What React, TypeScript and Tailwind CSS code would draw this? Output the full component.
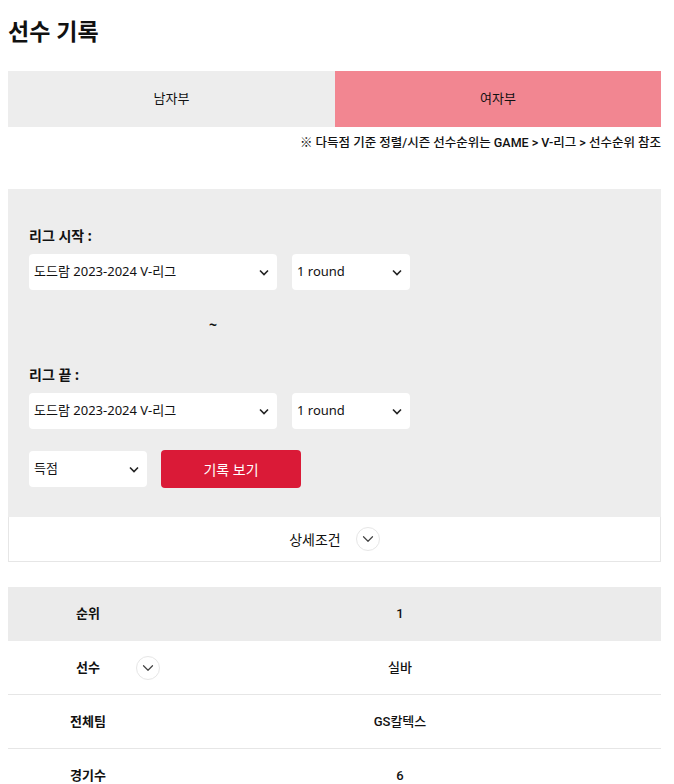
import { ChevronDown } from 'lucide-react';

const sans = "font-['Noto_Sans','Noto_Sans_CJK_KR',sans-serif]";
const roboto = "font-['Roboto','Noto_Sans_CJK_KR',sans-serif]";

function Caret() {
  return (
    <svg width="10" height="7" viewBox="0 0 10 7" className="shrink-0">
      <path d="M1 1.5 L5 5.5 L9 1.5" fill="none" stroke="#222" strokeWidth="1.6" />
    </svg>
  );
}

function Select({ label, width }: { label: string; width: string }) {
  return (
    <div
      className={`${width} flex h-9 items-center justify-between rounded-[4px] bg-white pr-[8px] pl-[5px] text-[13px] text-[#111]`}
    >
      <span>{label}</span>
      <Caret />
    </div>
  );
}

function CircleToggle() {
  return (
    <div className="flex h-[24px] w-[24px] items-center justify-center rounded-full border border-[#e6e6e6] bg-white">
      <ChevronDown size={18} strokeWidth={1.6} className="text-[#444]" />
    </div>
  );
}

const rows = [
  { label: '순위', value: '1', head: true },
  { label: '선수', value: '실바', toggle: true },
  { label: '전체팀', value: 'GS칼텍스' },
  { label: '경기수', value: '6' },
];

export default function App() {
  return (
    <div className={`${sans} h-[784px] w-[674px] overflow-hidden bg-white pr-[13px] pl-2 text-[#111]`}>
      <h1 className="pt-[16px] text-[23px] leading-[30px] font-bold">선수 기록</h1>

      <div className="mt-[25px] flex h-14 text-[13px]">
        <div className="flex w-[327px] items-center justify-center bg-[#ededed]">남자부</div>
        <div className="flex flex-1 items-center justify-center bg-[#f28691]">여자부</div>
      </div>
      <p className={`${roboto} mt-[7px] text-right text-[12.5px] leading-[18px] font-medium`}>
        ※ 다득점 기준 정렬/시즌 선수순위는 GAME &gt; V-리그 &gt; 선수순위 참조
      </p>

      <div className="mt-[37px] bg-[#ededed] px-[21px] pt-[37px] pb-[29px]">
        <p className="text-[14px] leading-[20px] font-bold">리그 시작 :</p>
        <div className="mt-[8px] flex gap-[15px]">
          <Select label="도드람 2023-2024 V-리그" width="w-[248px]" />
          <Select label="1 round" width="w-[118px]" />
        </div>
        <p className="mt-[25px] pl-[180px] text-[14px] leading-[20px] font-bold">~</p>
        <p className="mt-[30px] text-[14px] leading-[20px] font-bold">리그 끝 :</p>
        <div className="mt-[8px] flex gap-[15px]">
          <Select label="도드람 2023-2024 V-리그" width="w-[248px]" />
          <Select label="1 round" width="w-[118px]" />
        </div>
        <div className="mt-[21px] flex items-center gap-[14px]">
          <Select label="득점" width="w-[118px]" />
          <button className="h-[38px] w-[140px] rounded-[4px] bg-[#da1a37] text-[14px] text-white">
            기록 보기
          </button>
        </div>
      </div>

      <div className="flex h-[45px] items-center justify-center gap-[15px] border border-t-0 border-[#e6e6e6] text-[14px]">
        <span>상세조건</span>
        <CircleToggle />
      </div>

      <div className={`${roboto} mt-[25px] text-[13px]`}>
        {rows.map((r) => (
          <div
            key={r.label}
            className={`flex h-[54px] items-center ${r.head ? 'bg-[#ebebeb]' : 'border-b border-[#e6e6e6]'}`}
          >
            <div className="relative flex w-[160px] items-center justify-center font-bold">
              <span>{r.label}</span>
              {r.toggle && (
                <div className="absolute left-[128px]">
                  <CircleToggle />
                </div>
              )}
            </div>
            <div className="w-[464px] text-center font-medium">{r.value}</div>
          </div>
        ))}
      </div>
    </div>
  );
}
